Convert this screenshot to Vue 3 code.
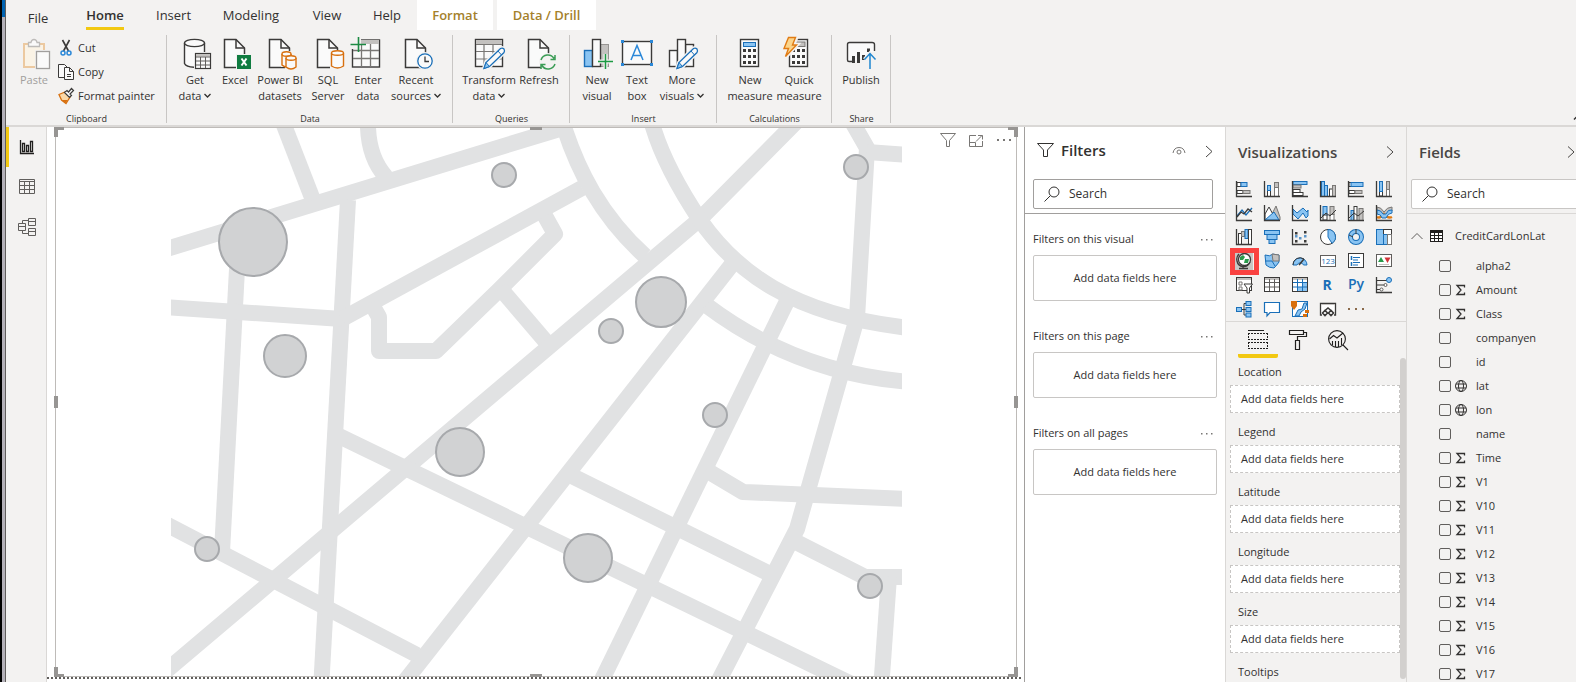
<script setup>
import { ref } from 'vue'

const D = '#3b3a39'
const B = '#1a6fb8'
const L = '#8ac4f2'
const G = '#c3c1bf'

const doc = `<path d="M5.500 1.500H17L25.500 10V29.500H5.500Z" fill="#fafafa" stroke="${D}" stroke-width="1.500"/><path d="M17 1.500V10H25.500" fill="none" stroke="${D}" stroke-width="1.500"/>`
const pencil = `<path d="M11 30.500L13 24.500L27.500 10.500Q29.500 9.500 31 11Q32 13 31 14.500L16.500 28.500Z" fill="#fafafa" stroke="#f3f2f1" stroke-width="4"/><path d="M11 30.500L13 24.500L27.500 10.500Q29.500 9.500 31 11Q32 13 31 14.500L16.500 28.500Z" fill="#fafafa" stroke="${B}" stroke-width="1.300"/><path d="M11 30.500L13 24.500L16.500 28.500Z" fill="${L}" stroke="${B}"/><path d="M25 13L28.500 17" stroke="${B}"/>`
const cylinder = (x, y, w, h) => `<path d="M${x} ${y}V${y + h}Q${x + w / 2} ${y + h + 4} ${x + w} ${y + h}V${y}" fill="#fafafa" stroke="#d8700f" stroke-width="1.400"/><ellipse cx="${x + w / 2}" cy="${y}" rx="${w / 2}" ry="2.200" fill="#fafafa" stroke="#d8700f" stroke-width="1.400"/>`
const keys = (x, y) => [0, 1, 2].map(r => [0, 1, 2].map(c => `<rect x="${x + c * 5}" y="${y + r * 6}" width="3" height="3" fill="${D}"/>`).join('')).join('')

const ribbonIcons = {
  database: `<path d="M5.500 5V26Q7 29.500 16 29.500V29.500H17V16H25.500V5" fill="#fafafa"/><path d="M5.500 5V25.500Q7 29 15 29.200M25.500 5V14" fill="none" stroke="${D}" stroke-width="1.400"/><ellipse cx="15.500" cy="5" rx="10" ry="3.600" fill="#fafafa" stroke="${D}" stroke-width="1.400"/><rect x="16.500" y="15.500" width="15" height="15" fill="#fafafa" stroke="${D}" stroke-width="1.200"/><rect x="17" y="16" width="14" height="2.500" fill="${G}"/><path d="M17 19H31M17 23H31M17 27H31M21.500 19V30M26.500 19V30" stroke="#605e5c"/>`,
  excel: doc + `<rect x="17" y="16" width="16" height="16" fill="#f3f2f1"/><rect x="18" y="17" width="14" height="14" fill="#107c41"/><path d="M22.500 20.500L27.500 27.500M27.500 20.500L22.500 27.500" stroke="#fff" stroke-width="2"/>`,
  datasets: doc + `<path d="M17 13H32V32H21V29H17Z" fill="#f3f2f1"/>` + cylinder(18, 16, 9, 11) + cylinder(22, 20, 10, 9),
  sql: doc + `<path d="M18 12H33V32H18Z" fill="#f3f2f1"/>` + cylinder(19.5, 15, 12, 13),
  grid: `<rect x=".500" y="2" width="27" height="27" fill="#fafafa" stroke="${D}" stroke-width="1.400"/><rect x="1" y="2" width="26" height="4" fill="${G}"/><path d="M1 12.500H27M1 20.500H27M9.500 6V29M18.500 6V29" stroke="#797775" stroke-width="1.300"/><path d="M-2 0H9V11H-2Z" fill="#f3f2f1"/><path d="M-1.500 6.500H14M6.500 -1V14" stroke="#1c8a43" stroke-width="1.600"/>`,
  recent: doc + `<circle cx="25" cy="23" r="9" fill="#f3f2f1"/><circle cx="25" cy="23" r="7.200" fill="#fafafa" stroke="${B}" stroke-width="1.300"/><path d="M25 18.500V23.500H29" fill="none" stroke="${D}" stroke-width="1.300"/>`,
  transform: `<rect x="2.500" y="1.500" width="27" height="27" fill="#fafafa" stroke="${D}" stroke-width="1.400"/><rect x="3" y="2" width="26" height="4" fill="${G}"/><path d="M3 6.500H29M3 13.500H29M3 21H29M11 6V28M20 6V28" stroke="#797775" stroke-width="1.200"/>` + pencil,
  refresh: doc + `<circle cx="25" cy="24" r="9" fill="#f3f2f1"/><path d="M18 22A7.200 7.200 0 0 1 31 20.500M32 17V21.500H27.500M32 26A7.200 7.200 0 0 1 19 27.500M18 31V26.500H22.500" fill="none" stroke="#3a9c55" stroke-width="1.500"/>`,
  visual: `<rect x="3.500" y="12.500" width="8" height="16" fill="${L}" stroke="${B}" stroke-width="1.400"/><rect x="19.500" y="6.500" width="8" height="22" fill="${G}" stroke="#979593"/><rect x="11.500" y="1.500" width="8" height="27" fill="#fafafa" stroke="${D}" stroke-width="1.400"/><path d="M17 23.500H32M24.500 16V31" stroke="#f3f2f1" stroke-width="4"/><path d="M17 23.500H32M24.500 16V31" stroke="#1c9a43" stroke-width="1.500"/>`,
  textbox: `<rect x="1.500" y="3.500" width="29" height="23" fill="#fafafa" stroke="${D}" stroke-width="1.400"/><path d="M10 22L16 7.500L22 22M12 17.500H20" fill="none" stroke="#2b88d8" stroke-width="1.500"/><path d="M0 2h3v3H0zM29 2h3v3h-3zM0 25h3v3H0zM29 25h3v3h-3z" fill="#2b88d8"/>`,
  more: `<rect x="3.500" y="12.500" width="8" height="16" fill="#fafafa" stroke="${D}" stroke-width="1.400"/><rect x="19.500" y="6.500" width="8" height="22" fill="#fafafa" stroke="${D}" stroke-width="1.400"/><rect x="11.500" y="1.500" width="8" height="27" fill="#fafafa" stroke="${D}" stroke-width="1.400"/>` + pencil,
  calculator: `<rect x="6.500" y="1.500" width="18" height="27" fill="#fafafa" stroke="${D}" stroke-width="1.400"/><rect x="9.500" y="4.500" width="12" height="4" fill="${L}" stroke="${B}"/>` + keys(9, 11),
  quick: `<rect x="6.500" y="1.500" width="18" height="27" fill="#fafafa" stroke="${D}" stroke-width="1.400"/><rect x="12" y="4" width="10" height="4.500" fill="${G}" stroke="#797775"/>` + keys(9, 11) + `<path d="M6 -1H14L10.500 6.500H14.500L2 20L5.500 10.500H1Z" fill="#ffd98a" stroke="#f3f2f1" stroke-width="3.500"/><path d="M5.500 -.500H12.500L9.500 7H13.500L2.500 18.500L5.500 10.500H1Z" fill="#fbd58b" stroke="#e07b14" stroke-width="1.400"/>`,
  publish: `<path d="M9 23.500H4Q2.500 23.500 2.500 22V6.500Q2.500 4.500 4.500 4.500H27Q29.500 4.500 29.500 6.500V13" fill="#fafafa" stroke="${D}" stroke-width="1.400"/><path d="M8.500 18V25M13.500 14V25M18.500 17V22M23.500 10.500V14" stroke="${D}" stroke-width="3"/><path d="M25 31V15M19.500 21.500L25 15.500L30.500 21.500" fill="none" stroke="#f3f2f1" stroke-width="4"/><path d="M25 31V15M19.500 21.500L25 15.500L30.500 21.500" fill="none" stroke="#1f86cf" stroke-width="1.500"/>`
}

const tabs = [
  { t: 'File', c: 'file' }, { t: 'Home', c: 'home' }, { t: 'Insert', c: 'insert' }, { t: 'Modeling', c: 'modeling' },
  { t: 'View', c: 'view' }, { t: 'Help', c: 'help' }, { t: 'Format', c: 'context format' }, { t: 'Data / Drill', c: 'context drill' }
]

const groups = [
  { name: 'Data', cls: 'g-data', items: [
    { a: 'Get', b: 'data', menu: true, icon: 'database', w: 'w44' }, { a: 'Excel', b: '', icon: 'excel', w: 'w36' },
    { a: 'Power BI', b: 'datasets', icon: 'datasets', w: 'w54' }, { a: 'SQL', b: 'Server', icon: 'sql', w: 'w42' },
    { a: 'Enter', b: 'data', icon: 'grid', w: 'w38' }, { a: 'Recent', b: 'sources', menu: true, icon: 'recent', w: 'w58' }] },
  { name: 'Queries', cls: 'g-queries', items: [
    { a: 'Transform', b: 'data', menu: true, icon: 'transform', w: 'w60' }, { a: 'Refresh', b: '', icon: 'refresh', w: 'w40' }] },
  { name: 'Insert', cls: 'g-insert', items: [
    { a: 'New', b: 'visual', icon: 'visual', w: 'w40' }, { a: 'Text', b: 'box', icon: 'textbox', w: 'w40' },
    { a: 'More', b: 'visuals', menu: true, icon: 'more', w: 'w50' }] },
  { name: 'Calculations', cls: 'g-calc', items: [
    { a: 'New', b: 'measure', icon: 'calculator', w: 'w46' }, { a: 'Quick', b: 'measure', icon: 'quick', w: 'w52' }] },
  { name: 'Share', cls: 'g-share', items: [{ a: 'Publish', b: '', icon: 'publish', w: 'w58' }] }
]

const axes = `<path d="M.500 0V15.500H16" fill="none" stroke="${D}" stroke-width="1.300"/>`
const r = (x, y, w, h, f, s) => `<rect x="${x}" y="${y}" width="${w}" height="${h}" fill="${f}" stroke="${s}"/>`
const vizIcons = [
  ['Stacked bar chart', r(1, 1.5, 4, 4, '#fff', D) + r(5, 1.5, 6, 4, L, B) + r(1, 9.5, 6, 3, '#fff', D) + r(7, 9.5, 7, 3, G, '#797775') + axes],
  ['Stacked column chart', r(3.5, 9.5, 3, 6, '#fff', D) + r(3.5, 4.5, 3, 5, L, B) + r(10.5, 6.5, 4, 9, '#fff', '#797775') + r(10.5, 1.5, 4, 5, G, '#797775') + axes],
  ['Clustered bar chart', r(1, .5, 14, 3, L, B) + r(1, 4, 8, 3, G, '#797775') + r(1, 8.5, 7, 3, '#fff', D) + r(1, 11.5, 10, 3, '#fff', D) + axes],
  ['Clustered column chart', r(1.5, .5, 3, 15, L, B) + r(4.5, 4.5, 3, 11, L, B) + r(9.5, 8, 3, 7.500, '#fff', D) + r(12.5, 4.5, 3, 11, G, '#797775') + axes],
  ['100% stacked bar chart', r(1, 1.5, 4, 4, '#fff', D) + r(3, 1.5, 12, 4, L, B) + r(1, 9.5, 6, 3, '#fff', D) + r(7, 9.5, 7, 3, G, '#797775') + axes],
  ['100% stacked column chart', r(3.5, 10, 3, 5, '#fff', D) + r(3.5, .5, 3, 10, L, B) + r(10.5, 8.5, 3, 7, '#fff', '#797775') + r(10.5, .5, 3, 8, G, '#797775') + axes],
  ['Line chart', `<path d="M1 11L6 5L10 10L16 3" fill="none" stroke="${B}" stroke-width="1.300"/><path d="M1 12L5 7L8 9L12 4L16 7" fill="none" stroke="${D}" stroke-width="1.300"/>` + axes],
  ['Area chart', `<path d="M5 15L12 1L16 12V15Z" fill="${G}" stroke="#797775"/><path d="M1 15V9L5 2L12 15Z" fill="#fff" stroke="${D}"/><path d="M1 15L10 7L15 15Z" fill="${L}" stroke="${B}"/>` + axes],
  ['Stacked area chart', `<path d="M1 4L5 8L11 3L15 7L16 5V11L14 13L11 8L6 14L1 9Z" fill="${L}" stroke="${B}"/>` + axes],
  ['Line and stacked column chart', r(3, 1.5, 4, 9, L, B) + r(3, 10, 4, 5, '#fff', D) + r(10, 1.5, 4, 8, G, '#797775') + r(10, 9.5, 4, 6, '#fff', '#797775') + `<path d="M1 13L6 8L10 11L16 5" stroke="${D}" fill="none"/>` + axes],
  ['Line and clustered column chart', r(3, 5.5, 3, 10, L, B) + r(6, 1.5, 3, 14, '#fff', D) + r(11, 3.5, 4, 12, G, '#797775') + `<path d="M1 13L6 8L10 11L16 6" stroke="${D}" fill="none"/>` + axes],
  ['Ribbon chart', `<path d="M1 2Q5 2 8 7Q11 2 16 2V6Q12 7 8 11Q5 7 1 6Z" fill="${G}" stroke="#797775"/><path d="M1 12Q4 14 8 9Q12 14 16 12" stroke="#e07b14" stroke-width="2.500" fill="none"/><path d="M1 5Q5 5 7 9H10Q12 4 16 5V8Q12 8 10 13H6Q5 9 1 9Z" fill="${L}" stroke="${B}"/>` + axes],
  ['Waterfall chart', r(2.5, 4.5, 3, 11, '#fff', D) + r(5.5, 2.5, 3, 5, G, '#797775') + r(9, .5, 3, 9, L, B) + r(12.5, .5, 3, 15, '#fff', D) + axes],
  ['Funnel chart', r(.5, 1.5, 15, 4, L, B) + r(3, 5.5, 10, 5, L, B) + r(5, 10.5, 6, 4, L, B)],
  ['Scatter chart', `<path d="M3 3h2.500v2.500H3zM12 2h2.500v2.500H12zM3 11h2.500v2.500H3zM12 11h2.500v2.500H12z" fill="${D}"/><path d="M3 6h2.500v2.500H3zM7 8h2.500v2.500H7zM12 6h2.500v2.500H12z" fill="${B}" opacity=".7"/>` + axes],
  ['Pie chart', `<circle cx="8" cy="8" r="7.500" fill="#fff" stroke="${D}"/><path d="M8 8V.500A7.500 7.500 0 0 1 12 14.300Z" fill="${L}" stroke="${B}"/>`],
  ['Donut chart', `<circle cx="8" cy="8" r="5.500" fill="none" stroke="${B}" stroke-width="5"/><circle cx="8" cy="8" r="5.500" fill="none" stroke="${L}" stroke-width="3"/><path d="M8 0V5M1 6L5 8" stroke="${D}"/>`],
  ['Treemap', r(.5, .5, 7, 15, L, B) + r(7.5, .5, 8, 5, '#fff', D) + r(7.5, 5.5, 4, 10, L, B) + r(11.5, 5.5, 4, 10, '#fff', '#797775')],
  ['Map', `<rect x="-3" y="-1" width="20" height="18" fill="#c8c6c4"/><path d="M3 1Q0 4 1 8Q2 13 7 13.500Q12 14 14 9M7 13V15.500M3 15.500H12" fill="none" stroke="${D}" stroke-width="1.300"/><circle cx="8.500" cy="6.500" r="6" fill="#fff" stroke="${D}" stroke-width="1.300"/><path d="M4 4L7 2L9 4L7 7L4 7ZM9 6L13 6L12 10L8 10Z" fill="#2a9a4b"/>`],
  ['Filled map', `<path d="M1 2Q6 4 9 1Q12 2 15 2V9Q13 12 10 15Q5 15 2 12Z" fill="${L}" stroke="${B}"/><path d="M8 1L15 2V8L9 8Z" fill="${G}" stroke="#797775"/><path d="M1 8H8L11 13" fill="none" stroke="${B}"/>`],
  ['Gauge', `<path d="M1 12A7 7 0 0 1 15 12H11.500A3.500 3.500 0 0 0 5 12Z" fill="${L}" stroke="${B}"/><path d="M1 12A7 7 0 0 1 12 6" fill="none" stroke="${D}"/><path d="M7 12L12 6" stroke="${D}" stroke-width="1.500"/>`],
  ['Card', r(.5, 2.5, 15, 11, '#fff', '#605e5c') + `<text x="8" y="11" font-size="8" text-anchor="middle" fill="${B}" font-family="Open Sans, sans-serif">123</text>`],
  ['Multi-row card', r(.5, .5, 15, 14, '#fff', D) + `<path d="M3.500 3V7M3.500 9V13" stroke="${B}" stroke-width="1.500"/><path d="M5 4.500H12M5 7H10M5 9.500H12M5 12H10" stroke="${B}"/>`],
  ['KPI', r(.5, 1.5, 15, 12, '#fff', '#605e5c') + `<path d="M2 9L5 4L8 9Z" fill="#2a9a4b"/><path d="M8.500 4.500H14.500L11.500 10Z" fill="#d13438"/><path d="M3 11.500H13" stroke="${G}"/>`],
  ['Slicer', r(.5, .5, 15, 13, '#fff', D) + `<path d="M1 2H15" stroke="${G}" stroke-width="2"/><path d="M3 5h3v3H3zM3 10h3v3H3z" fill="none" stroke="#797775"/><path d="M8 7H16.500L13.500 11V16H11V11Z" fill="#fff" stroke="${D}"/>`],
  ['Table', r(.5, .5, 15, 14, '#fff', D) + `<path d="M1 2H15" stroke="${G}" stroke-width="2"/><path d="M1 5.500H15M1 10H15M5.500 2V14M10.500 2V14" stroke="#605e5c"/>`],
  ['Matrix', r(.5, .5, 15, 14, '#fff', D) + `<path d="M10 5h5v9H5v-4h5z" fill="${L}"/><path d="M1 2H15" stroke="${G}" stroke-width="2"/><path d="M1 5.500H15M1 10H15M5.500 2V14M10.500 2V14" stroke="${B}"/>`],
  ['R script visual', `<text x="7" y="13" font-size="14" font-weight="700" text-anchor="middle" fill="${B}" font-family="Open Sans, sans-serif">R</text>`],
  ['Python visual', `<text x="8" y="12" font-size="14" font-weight="600" text-anchor="middle" fill="${B}" font-family="Open Sans, sans-serif">Py</text>`],
  ['Key influencers', `<path d="M1 3.500H11M1 8H8M1 12.500H4" stroke="${D}"/><circle cx="13" cy="3" r="2.500" fill="${L}" stroke="${B}"/><circle cx="9.500" cy="8" r="1.500" fill="#fff" stroke="#605e5c"/><circle cx="5.500" cy="12.500" r="1.500" fill="#fff" stroke="#605e5c"/>` + axes],
  ['Decomposition tree', `<path d="M5 8.500H8M8 2.500V14M8 2.500H11M8 8.500H11M8 14H11" stroke="${D}" fill="none"/>` + r(.5, 6.500, 5, 4, L, B) + r(10, .5, 5, 4, L, B) + r(10, 6.5, 5, 4, L, B) + r(10, 12, 5, 4, L, B)],
  ['Q&A', `<path d="M.500 1.500H15.500V11.500H6L3 15V11.500H.500Z" fill="#fff" stroke="${B}" stroke-width="1.200"/>`],
  ['ArcGIS map', r(.5, .5, 15, 15, '#fff', B) + `<path d="M3 15L6 9L10 8L12 2H15L13 8L9 11L7 15Z" fill="${L}" stroke="${B}"/><path d="M-1 0H5V5L2 9L-1 5Z" fill="#d8700f"/><path d="M11 13h4v3h-4zM13 9h4v3h-4z" fill="#d8700f"/>`],
  ['Power Apps visual', `<path d="M2 14H.500V2.500H15.500V14H14" fill="#fff" stroke="${D}" stroke-width="1.300"/><path d="M1 3.500H15" stroke="${G}"/><path d="M2.500 12L5 9.500L7.500 12L5 14.500ZM8.500 12L11 9.500L13.500 12L11 14.500ZM5 9.500L8 7L11 9.500" fill="none" stroke="${D}" stroke-width="1.600"/>`],
  ['More options', `<path d="M0 7h2v2H0zM7 7h2v2H7zM14 7h2v2h-2z" fill="#8a6a4a"/>`]
]

const roads = [
  'M165 249.500L566 127', 'M282 120L313 200', 'M368 120V127Q369 158 386 177', 'M348 200L321 690', 'M238 250L222 552',
  'M165 307L342 319', 'M342 319L582 188', 'M371 303L379 317V351H436L499 290L555 234L545 216', 'M500 288L547 343',
  'M160 676L700 219L798 120', 'M398 690L733 263', 'M160 521L417 655', 'M339 436L864 690',
  'M562 120L564 127C578 170 600 215 645 256', 'M650 118L653 127C663 160 680 190 700 220C735 270 790 315 910 328',
  'M706 305C755 342 820 375 910 382', 'M790 295L597 690', 'M851 120L867 148L857 318L797 529L714 690',
  'M867 152L910 155', 'M572 476L768 573', 'M706 470L743 492L910 499', 'M796 542L865 577H910', 'M889 577L881 690'
]
const bubbles = [[253, 242, 34], [285, 356, 21], [504, 175, 12], [661, 302, 25], [611, 331, 12], [856, 167, 12], [460, 452, 24], [207, 549, 12], [715, 415, 12], [588, 558, 24], [870, 586, 12]]

const filterSections = ['Filters on this visual', 'Filters on this page', 'Filters on all pages']
const wells = ['Location', 'Legend', 'Latitude', 'Longitude', 'Size', 'Tooltips']
const fields = ref([
  ['alpha2', ''], ['Amount', 'sum'], ['Class', 'sum'], ['companyen', ''], ['id', ''], ['lat', 'geo'], ['lon', 'geo'], ['name', ''],
  ['Time', 'sum'], ['V1', 'sum'], ['V10', 'sum'], ['V11', 'sum'], ['V12', 'sum'], ['V13', 'sum'], ['V14', 'sum'], ['V15', 'sum'], ['V16', 'sum'], ['V17', 'sum']
].map(([name, kind]) => ({ name, kind, on: false })))
const handles = ['tl', 'tc', 'tr', 'ml', 'mr', 'bl', 'bc', 'br']
</script>

<template>
  <div class="window">
    <div class="edge"><span class="edge-blue"></span></div>
    <div class="app">
      <header class="ribbon">
        <nav class="tabs">
          <button v-for="t in tabs" :key="t.t" :class="['tab', t.c]">{{ t.t }}</button>
        </nav>
        <div class="tools">
          <section class="group clipboard">
            <div class="items">
              <button class="tool paste">
                <svg width="32" height="32" viewBox="0 0 32 32" fill="none">
                  <rect x="6" y="6" width="20" height="23" fill="#faf3e6" stroke="#ecc9a0" stroke-width="2" />
                  <path d="M10.500 4.500H13Q13.500 1.500 16 1.500T19 4.500H21.500V8.500H10.500Z" fill="#fafafa" stroke="#bdbbb9" stroke-width="1.300" />
                  <rect x="17" y="12" width="16" height="20" fill="#f3f2f1" />
                  <rect x="18.500" y="13.500" width="13" height="17" fill="#fafafa" stroke="#a19f9d" stroke-width="1.300" />
                </svg>
                <span>Paste</span>
              </button>
              <div class="stack">
                <button>
                  <svg width="16" height="16" viewBox="0 0 16 16" fill="none">
                    <path d="M4.500 0L10.500 11M11.500 0L5.500 11" stroke="#3b3a39" stroke-width="1.600" />
                    <circle cx="5" cy="13" r="2" stroke="#2b88d8" stroke-width="1.500" /><circle cx="11" cy="13" r="2" stroke="#2b88d8" stroke-width="1.500" />
                  </svg>Cut
                </button>
                <button>
                  <svg width="16" height="16" viewBox="0 0 16 16" fill="#fafafa" stroke="#3b3a39">
                    <path d="M6 13.500H.500V.500H6.500L9 3" /><path d="M6.500 3.500H11.500L15.500 7.500V15.500H6.500ZM11.500 3.500V7.500H15.500M9 10.500H13M9 12.500H13" />
                  </svg>Copy
                </button>
                <button>
                  <svg width="16" height="16" viewBox="0 0 16 16">
                    <path d="M1 6.500L7 4L12 9L8 15.500L3.500 12Z" fill="#fbd9a8" stroke="#d8700f" stroke-width="1.300" /><path d="M3.500 12L8 15L9.500 12Z" fill="#d8700f" />
                    <path d="M6.500 4.500L9 2.500L10.500 4L13.500 .500L15.500 2.500L12 6L13.500 7.500L11.500 9.500Z" fill="#fafafa" stroke="#3b3a39" stroke-width="1.200" />
                  </svg>Format painter
                </button>
              </div>
            </div>
            <div class="caption">Clipboard</div>
          </section>
          <section v-for="g in groups" :key="g.name" :class="['group', g.cls]">
            <div class="items">
              <button v-for="i in g.items" :key="i.icon" :class="['tool', i.w]">
                <svg width="32" height="32" viewBox="0 0 32 32" fill="none" v-html="ribbonIcons[i.icon]"></svg>
                <span>{{ i.a }}</span>
                <span v-if="i.b">{{ i.b }}<svg v-if="i.menu" class="caret" width="7" height="6" viewBox="0 0 7 6" fill="none"><path d="M.500 2L3.500 5L6.500 2" stroke="#323130" stroke-width="1.300" /></svg></span>
              </button>
            </div>
            <div class="caption">{{ g.name }}</div>
          </section>
          <button class="collapse" aria-label="Collapse ribbon">
            <svg width="12" height="8" viewBox="0 0 12 8" fill="none"><path d="M1 6.500L6 1.500L11 6.500" stroke="#323130" stroke-width="1.500" /></svg>
          </button>
        </div>
      </header>

      <main class="body">
        <nav class="rail">
          <button class="on" aria-label="Report">
            <svg width="16" height="16" viewBox="0 0 16 16" fill="none" stroke="#201f1e" stroke-width="1.300"><path d="M1.500 1V14.500H15" /><path d="M3.500 4.500H5.500V12.500H3.500ZM7.500 6.500H9.500V12.500H7.500ZM11.500 2.500H13.500V12.500H11.500Z" /></svg>
          </button>
          <button aria-label="Data">
            <svg width="16" height="16" viewBox="0 0 16 16" fill="none" stroke="#605e5c"><path d="M.500 .500H15.500V14.500H.500ZM.500 2.500H15.500M.500 6.500H15.500M.500 10.500H15.500M5.500 2.500V14.500M10.500 2.500V14.500" /></svg>
          </button>
          <button aria-label="Model">
            <svg width="18" height="18" viewBox="0 0 18 18" fill="none" stroke="#605e5c"><path d="M.500 5.500H7.500V12.500H.500ZM.500 8.500H7.500M10.500 .500H17.500V7.500H10.500ZM10.500 3.500H17.500M10.500 10.500H17.500V17.500H10.500ZM10.500 13.500H17.500M4.500 5.500V2.500H10.500M4.500 12.500V15.500H10.500" /></svg>
          </button>
        </nav>

        <section class="canvas">
          <div class="visual">
            <svg class="map" viewBox="56 128 960 548" preserveAspectRatio="xMidYMid meet">
              <clipPath id="tile"><rect x="171" y="120" width="731" height="570" /></clipPath>
              <g clip-path="url(#tile)" fill="none" stroke="#e1e2e3" stroke-width="16" stroke-linejoin="round"><path v-for="d in roads" :key="d" :d="d" /></g>
              <g fill="#d1d2d3" stroke="#a7a9ac" stroke-width="2"><circle v-for="c in bubbles" :key="c.join()" :cx="c[0]" :cy="c[1]" :r="c[2]" /></g>
            </svg>
            <div class="visual-tools">
              <button aria-label="Filters"><svg width="16" height="16" viewBox="0 0 16 16" fill="none" stroke="#797775"><path d="M.500 1.500H15.500L9.500 8.500V14.500H6.500V8.500Z" /></svg></button>
              <button aria-label="Focus mode"><svg width="16" height="16" viewBox="0 0 16 16" fill="none" stroke="#797775"><path d="M8 3.500H1.500V14.500H14.500V9M1.500 10.500H7.500V14.500M8 9.500L14 3.500M10 3.500H14.500V7.500" /></svg></button>
              <button aria-label="More options"><svg width="16" height="16" viewBox="0 0 16 16" fill="#797775"><path d="M1 7h2v2H1zM7 7h2v2H7zM13 7h2v2h-2z" /></svg></button>
            </div>
            <span v-for="h in handles" :key="h" :class="['handle', h]"></span>
          </div>
        </section>

        <aside class="filters">
          <div class="head">
            <svg width="18" height="18" viewBox="0 0 18 18" fill="none" stroke="#323130"><path d="M.500 1.500H16.500L10.500 8V14.500H6.500V8Z" /></svg>
            <h2>Filters</h2>
            <svg class="eye" width="14" height="10" viewBox="0 0 14 10" fill="none" stroke="#797775"><path d="M1 7Q2 1.500 7 1.500T13 7" /><circle cx="7" cy="6" r="2" /></svg>
            <svg width="8" height="14" viewBox="0 0 8 14" fill="none" stroke="#484644"><path d="M1 2L7 7.500L1 13" /></svg>
          </div>
          <label class="search"><svg width="16" height="16" viewBox="0 0 16 16" fill="none" stroke="#323130"><circle cx="10" cy="6" r="5" /><path d="M6.500 9.500L.500 15.500" /></svg><input type="text" placeholder="Search" aria-label="Search filters" /></label>
          <div class="rule"></div>
          <section v-for="s in filterSections" :key="s" class="fsec">
            <div class="flabel"><span>{{ s }}</span><button :aria-label="s + ' options'"><svg width="12" height="4" viewBox="0 0 12 4" fill="#797775"><path d="M0 2h1.500v1.500H0zM5 2h1.500v1.500H5zM10 2h1.500v1.500H10z" /></svg></button></div>
            <div class="fbox">Add data fields here</div>
          </section>
        </aside>

        <aside class="viz">
          <div class="head">
            <h2>Visualizations</h2>
            <svg width="8" height="14" viewBox="0 0 8 14" fill="none" stroke="#484644"><path d="M1 1.500L7 7L1 12.500" /></svg>
          </div>
          <div class="gallery">
            <button v-for="[name, art] in vizIcons" :key="name" :aria-label="name" :class="{ picked: name === 'Map' }"><svg width="16" height="16" viewBox="0 0 16 16" fill="none" v-html="art"></svg></button>
          </div>
          <div class="vtabs">
            <button class="on" aria-label="Fields"><svg width="20" height="20" viewBox="0 0 20 20" fill="none" stroke="#201f1e"><path d="M0 .500H16" /><path d="M0 3.500H20M0 9.500H20M0 12.500H20M0 18.500H20M.500 3V10M19.500 3V10M.500 12V19M19.500 12V19" stroke-dasharray="2 1" /></svg></button>
            <button aria-label="Format"><svg width="20" height="20" viewBox="0 0 20 20" fill="none" stroke="#201f1e" stroke-width="1.200"><path d="M1.500 .500H15.500V4.500H1.500ZM15.500 2.500H18.500V6.500H9.500V10.500M7.500 10.500H11.500V19.500H7.500Z" /></svg></button>
            <button aria-label="Analytics"><svg width="20" height="20" viewBox="0 0 20 20" fill="none" stroke="#201f1e" stroke-width="1.100"><circle cx="9" cy="9" r="8.400" /><path d="M1.500 9L5.500 5.500L9 8L15 3M4.500 11V15M7.500 11V17M10.500 11V17M13.500 8V15M15 15L20 20" /></svg></button>
          </div>
          <div class="wells">
            <section v-for="(w, n) in wells" :key="w">
              <h3>{{ w }}</h3>
              <div v-if="n < 5" class="well">Add data fields here</div>
            </section>
            <span class="bar"></span>
          </div>
        </aside>

        <aside class="fields">
          <div class="head">
            <h2>Fields</h2>
            <svg width="8" height="14" viewBox="0 0 8 14" fill="none" stroke="#484644"><path d="M1 1.500L7 7L1 12.500" /></svg>
          </div>
          <label class="search"><svg width="16" height="16" viewBox="0 0 16 16" fill="none" stroke="#323130"><circle cx="10" cy="6" r="5" /><path d="M6.500 9.500L.500 15.500" /></svg><input type="text" placeholder="Search" aria-label="Search fields" /></label>
          <div class="rule"></div>
          <button class="entity">
            <svg width="12" height="8" viewBox="0 0 12 8" fill="none" stroke="#605e5c"><path d="M.500 7L6 1.500L11.500 7" /></svg>
            <svg width="13" height="12" viewBox="0 0 13 12"><rect width="13" height="12" fill="#201f1e" /><path d="M1 3h3v2H1zM5 3h3v2H5zM9 3h3v2H9zM1 6h3v2H1zM5 6h3v2H5zM9 6h3v2H9zM1 9h3v2H1zM5 9h3v2H5zM9 9h3v2H9z" fill="#fff" /></svg>
            <span>CreditCardLonLat</span>
          </button>
          <ul>
            <li v-for="f in fields" :key="f.name">
              <label>
                <input v-model="f.on" type="checkbox" />
                <svg width="12" height="12" viewBox="0 0 12 12" fill="none" stroke="#323130">
                  <path v-if="f.kind === 'sum'" d="M9.500 3.500V1.500H2L6 6L2 10.500H9.500V8.500" stroke-width="1.300" />
                  <g v-if="f.kind === 'geo'"><circle cx="6" cy="6" r="5.500" /><ellipse cx="6" cy="6" rx="2.500" ry="5.500" /><path d="M1 4H11M1 8H11" /></g>
                </svg>
                <span>{{ f.name }}</span>
              </label>
            </li>
          </ul>
        </aside>
      </main>
    </div>
  </div>
</template>

<style>
body { margin: 0; }
</style>

<style scoped>
*, *::before, *::after { box-sizing: border-box; }
.window { display: flex; height: 100vh; overflow: hidden; background: #f3f2f1; color: #323130; font: 11px/16px "Open Sans", "Noto Sans", sans-serif; }
button { font: inherit; color: inherit; background: none; border: 0; padding: 0; margin: 0; white-space: nowrap; }
h2, h3, ul { margin: 0; padding: 0; font-weight: 400; list-style: none; }
svg { display: block; flex: none; overflow: visible; }
.edge { width: 6px; flex: none; background: #b3b0b8; border-left: 2px solid #000; border-right: 1px solid #605e5c; }
.edge-blue { display: block; height: 17px; background: #0063b1; }
.app { flex: 1; min-width: 0; display: flex; flex-direction: column; }

.ribbon { flex: none; border-bottom: 2px solid #dad8d6; }
.tabs { display: flex; height: 30px; font-size: 13px; line-height: 18px; }
.tab { height: 30px; text-align: center; flex: none; }
.file { width: 40px; margin-left: 12px; padding-top: 6px; }
.home { width: 38px; margin: 0 0 0 28px; font-weight: 600; border-bottom: 3px solid #f2c811; padding-top: 3px; }
.insert { width: 34px; margin-left: 32px; }
.modeling { width: 60px; margin-left: 31px; }
.view { width: 32px; margin-left: 30px; }
.help { width: 30px; margin-left: 29px; }
.context { background: #fff; color: #a4812b; font-weight: 600; }
.format { width: 76px; margin-left: 15px; }
.drill { width: 99px; margin-left: 4px; }
.tools { display: flex; height: 95px; padding-top: 5px; }
.group { position: relative; flex: none; padding-top: 3px; }
.group::after { content: ""; position: absolute; right: 0; top: 0; height: 88px; width: 1px; background: #c8c6c4; }
.items { display: flex; height: 75px; justify-content: flex-start; padding-left: 6px; }
.clipboard { width: 161px; }
.clipboard .items { padding-left: 7px; }
.g-data { width: 286px; }
.g-queries { width: 117px; }
.g-insert { width: 147px; }
.g-insert .items { padding-left: 7px; }
.g-calc { width: 115px; }
.g-calc .items { padding-left: 10px; }
.g-share { width: 59px; }
.g-share .items { padding-left: 0; }
.tool { display: flex; flex-direction: column; align-items: center; height: 66px; flex: none; }
.tool svg:first-child { margin-bottom: 2px; }
.tool span { display: flex; align-items: center; gap: 3px; }
.paste { width: 42px; color: #a19f9d; }
.w36 { width: 36px; } .w38 { width: 38px; } .w40 { width: 40px; } .w42 { width: 42px; } .w44 { width: 44px; } .w46 { width: 46px; }
.w50 { width: 50px; } .w52 { width: 52px; } .w54 { width: 54px; } .w58 { width: 58px; } .w60 { width: 60px; }
.stack { display: flex; flex-direction: column; align-items: flex-start; margin-left: 3px; height: 72px; margin-top: -2px; }
.stack button { display: flex; align-items: center; gap: 4px; height: 24px; }
.caption { text-align: center; font-size: 9px; line-height: 12px; }
.collapse { margin-left: auto; margin-right: -9px; align-self: flex-end; padding-bottom: 4px; }

.body { flex: 1; min-height: 0; display: grid; grid-template-columns: 41px minmax(0, 1fr) 201px 181px 170px; }
.rail { border-right: 1px solid #dad8d6; display: flex; flex-direction: column; }
.rail button { height: 40px; display: flex; align-items: center; justify-content: center; border-left: 3px solid transparent; padding-right: 1px; }
.rail .on { border-left-color: #f2c811; }
.canvas { background: #fff; display: flex; flex-direction: column; padding: 0 2px 3px 0; }
.canvas::after { content: ""; height: 2px; background: repeating-linear-gradient(90deg, #605e5c 0 2px, #fff 2px 4px); }
.visual { position: relative; flex: 1; min-height: 0; margin: 0 5px 0 8px; border: 1px solid #bebbb8; }
.map { width: 100%; height: 100%; overflow: hidden; }
.visual-tools { position: absolute; right: 4px; top: 4px; display: flex; gap: 12px; }
.handle { position: absolute; width: 10px; height: 10px; border: 0 solid #979593; }
.tl { left: -2px; top: -1px; border-top-width: 3px; border-left-width: 4px; }
.tr { right: -2px; top: -1px; border-top-width: 3px; border-right-width: 4px; }
.bl { left: -2px; bottom: -1px; border-bottom-width: 3px; border-left-width: 4px; }
.br { right: -2px; bottom: -1px; border-bottom-width: 3px; border-right-width: 4px; }
.tc, .bc { left: calc(50% - 6px); width: 12px; height: 3px; background: #979593; }
.tc { top: -1px; } .bc { bottom: -1px; }
.ml, .mr { top: calc(50% - 6px); width: 4px; height: 12px; background: #979593; }
.ml { left: -2px; } .mr { right: -2px; }

aside { min-width: 0; overflow: hidden; }
.head { display: flex; align-items: center; }
.head h2 { flex: 1; font-size: 15px; line-height: 20px; font-weight: 600; }
.search { display: flex; align-items: center; height: 30px; background: #fff; border: 1px solid #a19f9d; border-radius: 2px; padding-left: 10px; gap: 9px; }
.search input { flex: 1; min-width: 0; border: 0; outline: 0; padding: 0; background: none; font: inherit; font-size: 12px; color: inherit; }
.search input::placeholder { color: #323130; opacity: 1; }
.filters { background: #fff; border-left: 1px solid #a19f9d; }
.filters .head { height: 48px; padding: 0 12px 0 12px; margin-bottom: 4px; }
.filters .head h2 { margin-left: 6px; line-height: 24px; padding-bottom: 2px; }
.eye { margin-right: 19px; }
.filters .search { margin: 0 12px 0 8px; }
.filters .rule { height: 1px; background: #a19f9d; margin: 4px 0 17px; }
.fsec { padding: 0 8px 0 8px; margin-bottom: 27px; }
.flabel { display: flex; justify-content: space-between; align-items: center; height: 16px; margin-bottom: 8px; padding-right: 4px; }
.fbox { height: 46px; border: 1px solid #c8c6c4; border-radius: 2px; display: flex; align-items: center; justify-content: center; }
.viz, .fields { border-left: 1px solid #dad8d6; }
.viz { display: flex; flex-direction: column; }
.viz .head { height: 50px; flex: none; padding: 0 12px; color: #484644; }
.gallery { flex: none; display: grid; grid-template-columns: repeat(6, 28px); grid-auto-rows: 24px; padding-left: 4px; border-bottom: 1px solid #dad8d6; }
.gallery button { display: flex; align-items: center; justify-content: center; position: relative; }
.picked::after { content: ""; position: absolute; left: 0; top: -1px; width: 29px; height: 27px; border: 5px solid #fa4240; }
.vtabs { display: flex; flex: none; padding-left: 12px; height: 36px; }
.vtabs button { width: 40px; display: flex; justify-content: center; padding-top: 8px; border-bottom: 4px solid transparent; border-radius: 2px; }
.vtabs .on { border-bottom-color: #f2c811; }
.wells { position: relative; flex: 1; min-height: 0; padding: 1px 6px 0 4px; display: flex; flex-direction: column; gap: 6px; }
.wells h3 { font-size: 11px; line-height: 26px; padding-left: 8px; }
.well { height: 28px; background: #fff; border: 1px dashed #c8c6c4; display: flex; align-items: center; padding-left: 10px; }
.bar { position: absolute; right: 0; top: 0; bottom: 3px; width: 6px; border-radius: 3px; background: #d2d0ce; }
.fields .head { height: 50px; padding: 0 1px 0 12px; margin-bottom: 2px; color: #484644; }
.fields .search { margin: 0 -4px 0 4px; border-color: #c8c6c4; }
.fields .rule { height: 1px; background: #dad8d6; margin: 4px 0 10px; }
.entity { display: flex; align-items: center; height: 24px; padding-left: 4px; }
.entity svg + svg { margin: 0 12px 0 7px; }
ul { padding-top: 6px; }
li label { display: flex; align-items: center; height: 24px; padding-left: 32px; }
li input { appearance: none; width: 12px; height: 12px; flex: none; margin: 0 4px 0 0; border: 1px solid #605e5c; border-radius: 2px; }
li input:checked { background: #605e5c; }
li span { margin-left: 9px; }
</style>
